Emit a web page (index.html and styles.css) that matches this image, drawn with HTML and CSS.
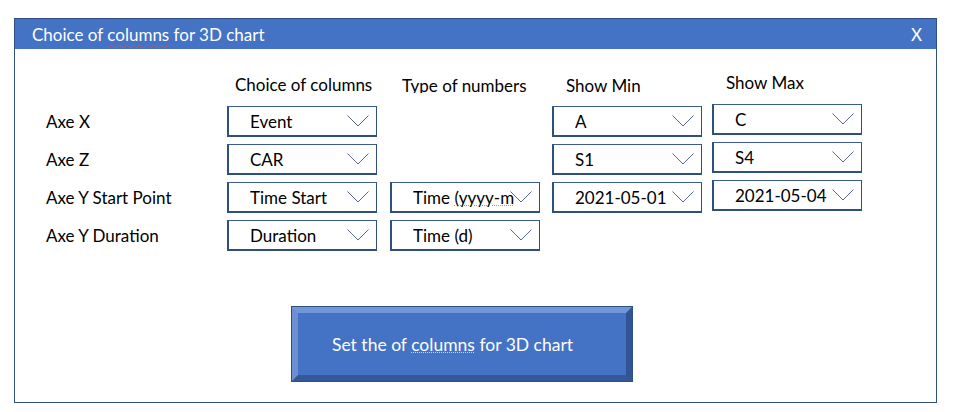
FILE: index.html
```html
<!DOCTYPE html>
<html>
<head>
<meta charset="utf-8">
<link rel="stylesheet" href="styles.css">
</head>
<body>
<div class="dialog">
  <div class="titlebar">
    <span class="title">Choice of <span class="spell">columns</span> for 3D chart</span>
    <span class="close">X</span>
  </div>
  <div class="body">
    <div class="grid">
      <div class="label"></div>
      <div class="head h1">Choice of columns</div>
      <div class="head h2"><span class="clip">Type of numbers</span></div>
      <div class="head h3">Show Min</div>
      <div class="head h4">Show Max</div>

      <div class="label">Axe X</div>
      <div class="dd"><span class="val">Event</span><svg class="chev" width="22" height="12" viewBox="0 0 22 12"><polyline points="0.5,0.5 11,11 21.5,0.5"/></svg></div>
      <div class="empty"></div>
      <div class="dd"><span class="val">A</span><svg class="chev" width="22" height="12" viewBox="0 0 22 12"><polyline points="0.5,0.5 11,11 21.5,0.5"/></svg></div>
      <div class="dd up"><span class="val">C</span><svg class="chev" width="22" height="12" viewBox="0 0 22 12"><polyline points="0.5,0.5 11,11 21.5,0.5"/></svg></div>

      <div class="label">Axe Z</div>
      <div class="dd"><span class="val">CAR</span><svg class="chev" width="22" height="12" viewBox="0 0 22 12"><polyline points="0.5,0.5 11,11 21.5,0.5"/></svg></div>
      <div class="empty"></div>
      <div class="dd"><span class="val">S1</span><svg class="chev" width="22" height="12" viewBox="0 0 22 12"><polyline points="0.5,0.5 11,11 21.5,0.5"/></svg></div>
      <div class="dd up"><span class="val">S4</span><svg class="chev" width="22" height="12" viewBox="0 0 22 12"><polyline points="0.5,0.5 11,11 21.5,0.5"/></svg></div>

      <div class="label">Axe Y Start Point</div>
      <div class="dd"><span class="val">Time Start</span><svg class="chev" width="22" height="12" viewBox="0 0 22 12"><polyline points="0.5,0.5 11,11 21.5,0.5"/></svg></div>
      <div class="dd"><span class="val tight">Time <span class="spell2">(yyyy-mm-dd)</span></span><svg class="chev" width="22" height="12" viewBox="0 0 22 12"><polyline points="0.5,0.5 11,11 21.5,0.5"/></svg></div>
      <div class="dd"><span class="val">2021-05-01</span><svg class="chev" width="22" height="12" viewBox="0 0 22 12"><polyline points="0.5,0.5 11,11 21.5,0.5"/></svg></div>
      <div class="dd up"><span class="val">2021-05-04</span><svg class="chev" width="22" height="12" viewBox="0 0 22 12"><polyline points="0.5,0.5 11,11 21.5,0.5"/></svg></div>

      <div class="label">Axe Y Duration</div>
      <div class="dd"><span class="val">Duration</span><svg class="chev" width="22" height="12" viewBox="0 0 22 12"><polyline points="0.5,0.5 11,11 21.5,0.5"/></svg></div>
      <div class="dd"><span class="val">Time (d)</span><svg class="chev" width="22" height="12" viewBox="0 0 22 12"><polyline points="0.5,0.5 11,11 21.5,0.5"/></svg></div>
      <div class="empty"></div>
      <div class="empty"></div>
    </div>
    <div class="btnrow">
      <div class="btn"><span class="btntext">Set the of <span class="spell3">columns</span> for 3D chart</span></div>
    </div>
  </div>
</div>
</body>
</html>
```

FILE: styles.css
```css
* { box-sizing: border-box; }
body {
  margin: 0;
  background: #ffffff;
  font-family: Lato, "Open Sans", sans-serif;
  color: #000;
}
.dialog {
  margin: 18px 0 0 14px;
  width: 923px;
  height: 385px;
  border: 1px solid #2f4f80;
  display: flex;
  flex-direction: column;
}
.titlebar {
  height: 30px;
  background: #4472c4;
  color: #fff;
  display: flex;
  align-items: center;
  justify-content: space-between;
  padding: 0 14px 0 17px;
  font-size: 17px;
}
.spell {
  text-decoration: underline wavy #d05050;
  text-decoration-thickness: 1px;
  text-underline-offset: 3px;
}
.close { font-size: 17px; }
.body {
  flex: 1;
  padding: 26px 0 0 31px;
  display: flex;
  flex-direction: column;
}
.grid {
  display: grid;
  grid-template-columns: 181px 163px 162px 160px 150px;
  grid-template-rows: 24px 31px 31px 31px 31px;
  row-gap: 7px;
  font-size: 17px;
}
.label {
  display: flex;
  align-items: center;
  white-space: nowrap;
}
.head {
  font-size: 17px;
  line-height: 20px;
  white-space: nowrap;
}
.h1 { padding-left: 8px; }
.h2 { padding-left: 12px; padding-top: 1px; }
.h2 .clip {
  display: inline-block;
  height: 17px;
  overflow: hidden;
  line-height: 20px;
}
.h3 { padding-left: 14px; padding-top: 1px; }
.h4 { padding-left: 14px; margin-top: -2px; }
.dd {
  height: 31px;
  width: 150px;
  border: 1px solid #2f4f80;
  border-left-width: 2px;
  border-bottom-width: 2px;
  border-top-color: #3a5b94;
  display: flex;
  align-items: center;
  padding: 0 7px 0 21px;
  background: #fff;
}
.up { margin-top: -2px; }
.val {
  flex: 1;
  white-space: nowrap;
  overflow: hidden;
  font-size: 17px;
}
.tight { margin-right: -4px; }
.spell2 {
  text-decoration: underline dotted #d08080;
  text-decoration-thickness: 1px;
}
.chev {
  flex: none;
  fill: none;
  stroke: #56698c;
  stroke-width: 1;
}
.btnrow {
  padding-left: 246px;
  margin-top: 56px;
}
.btn {
  width: 340px;
  height: 74px;
  background: #4472c4;
  border-style: solid;
  border-width: 6px;
  border-top-color: #7297d6;
  border-left-color: #6b8fd0;
  border-right-color: #2f5597;
  border-bottom-color: #33599a;
  outline: 1px solid #2f4f80;
  color: #fff;
  display: flex;
  align-items: center;
  padding-left: 34px;
  padding-top: 1px;
}
.btntext {
  font-size: 17.5px;
  white-space: nowrap;
}
.spell3 {
  text-decoration: underline dotted #c8d4ee;
  text-decoration-thickness: 1px;
}
```
